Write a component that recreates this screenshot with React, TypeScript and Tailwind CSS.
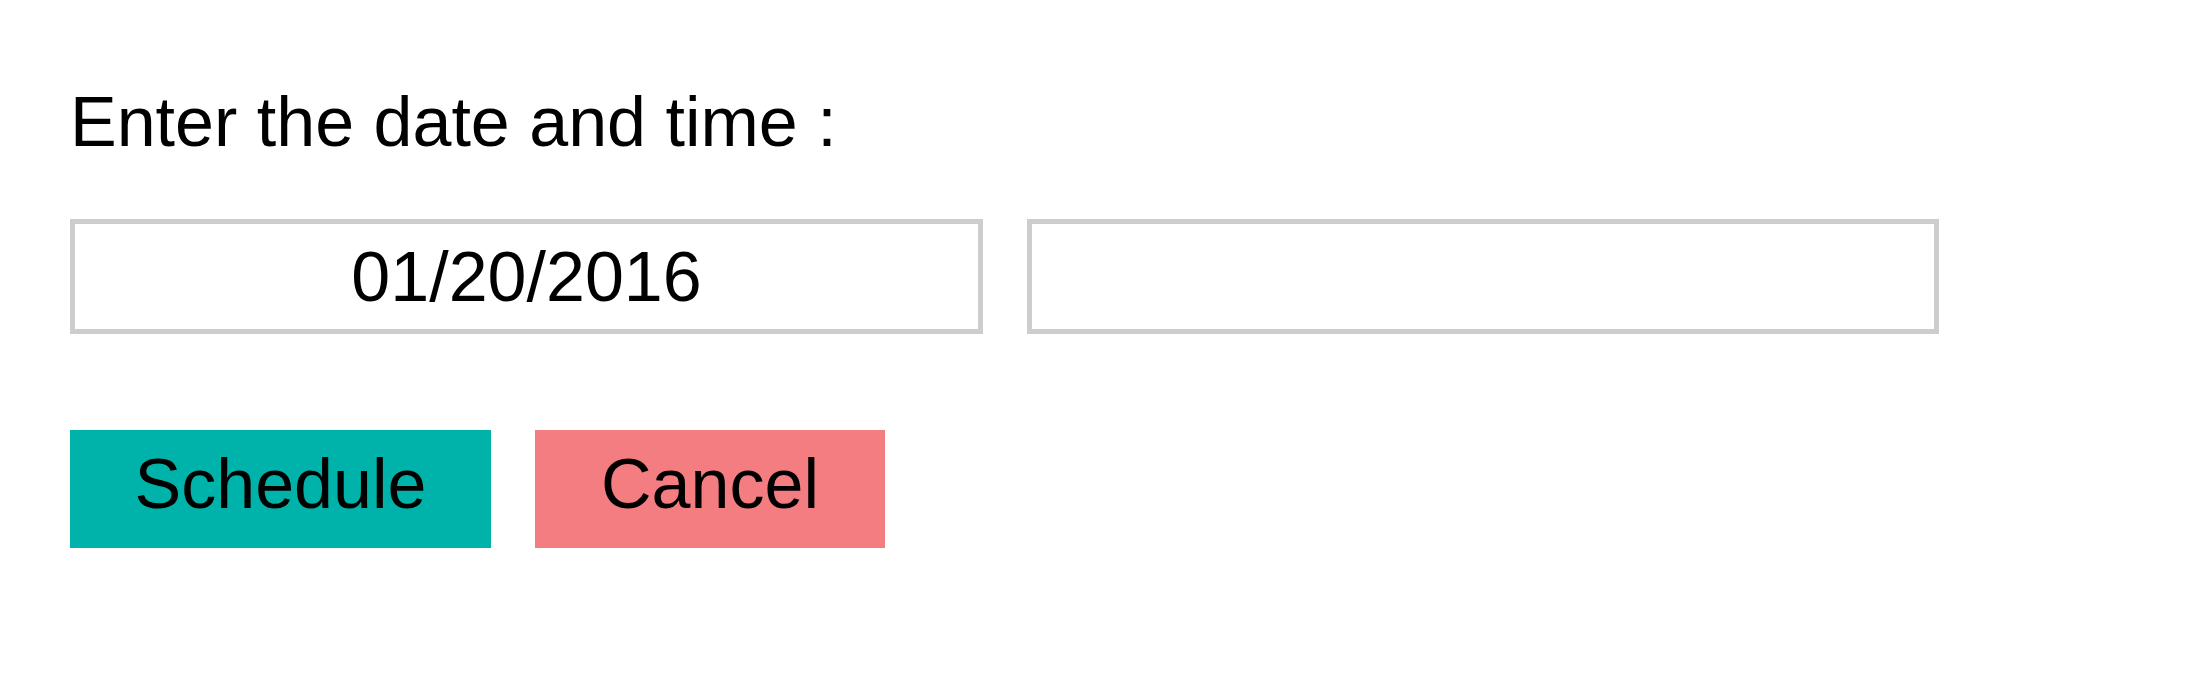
import {useState} from "react";

export default function App() {
  const [date, setDate] = useState("01/20/2016");
  const [time, setTime] = useState("");

  return (
    <div className="min-h-[680px] w-full bg-white pl-[70px] pt-[82px] font-['Liberation_Sans',Arial,sans-serif] text-black">
      <p className="text-[70px] leading-[80px]">Enter the date and time :</p>

      <div className="mt-[57px] flex gap-[44px]">
        <input
          type="text"
          value={date}
          onChange={(e) => setDate(e.target.value)}
          className="h-[115px] w-[913px] border-[5px] border-[#cdcdcd] bg-white text-center text-[70px] text-black outline-none"
        />
        <input
          type="text"
          value={time}
          onChange={(e) => setTime(e.target.value)}
          className="h-[115px] w-[912px] border-[5px] border-[#cdcdcd] bg-white text-center text-[70px] text-black outline-none"
        />
      </div>

      <div className="mt-[96px] flex gap-[44px]">
        <button className="h-[118px] w-[421px] bg-[#00b3aa] pb-[10px] text-[70px] leading-none text-black">
          Schedule
        </button>
        <button className="h-[118px] w-[350px] bg-[#f37d80] pb-[10px] text-[70px] leading-none text-black">
          Cancel
        </button>
      </div>
    </div>
  );
}
